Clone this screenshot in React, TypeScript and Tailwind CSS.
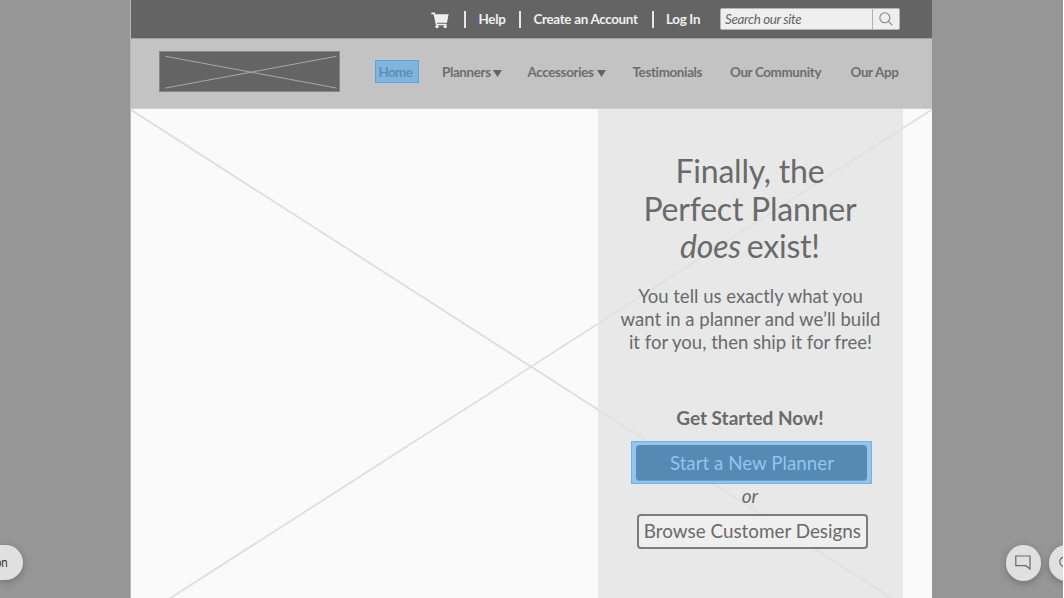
import React from "react";

const utilityLinks = [
  { label: "Help", box: "w-[55px]" },
  { label: "Create an Account", box: "w-[132.5px]" },
  { label: "Log In", box: "w-[68px]" },
];

const navItems = [
  { label: "Planners", box: "w-[85.5px]", arrow: "left-[50.5px]" },
  { label: "Accessories", box: "w-[105px]", arrow: "left-[69px]" },
  { label: "Testimonials", box: "w-[97.5px]" },
  { label: "Our Community", box: "w-[120.5px]" },
  { label: "Our App", box: "w-[60px]" },
];

function CartIcon() {
  return (
    <svg className="h-[18px] w-[18px] shrink-0" viewBox="0 0 18 18" fill="#efefef">
      <path d="M.3.5h3.6l.5 1.7h13.2L16 10.8H5.9l.3 1h9.4v1.4H4.9L2.6 2.2H.3z" />
      <circle cx="6" cy="14.6" r="1.7" />
      <circle cx="14.2" cy="14.6" r="1.7" />
    </svg>
  );
}

function UtilityBar() {
  return (
    <div className="flex h-[38px] shrink-0 items-center bg-[#646464] pl-[300px] text-[13.4px] font-bold tracking-[-0.31px] text-[#efefef]">
      <div className="flex w-[33px] pt-[3px]">
        <CartIcon />
      </div>
      {utilityLinks.map((l) => (
        <div key={l.label} className={`flex shrink-0 items-center whitespace-nowrap ${l.box}`}>
          <span className="mr-[12.5px] mt-px h-[17px] w-[2px] shrink-0 bg-[#e6e6e6]" />
          <a>{l.label}</a>
        </div>
      ))}
      <div className="flex h-[22px] w-[180px] shrink-0 items-center rounded-[2px] border border-[#b5b5b5] bg-[#efefef]">
        <span className="w-[151px] whitespace-nowrap pl-[4.5px] pt-px text-[13.4px] font-normal italic tracking-[-0.35px] text-[#646464]">
          Search our site
        </span>
        <span className="flex h-full flex-1 items-center justify-center border-l border-[#b0b0b0]">
          <svg className="h-[14px] w-[14px]" viewBox="0 0 14 14" fill="none" stroke="#858585" strokeWidth="1.1">
            <circle cx="5.8" cy="5.8" r="5" />
            <path d="M9.4 9.4l4 4" />
          </svg>
        </span>
      </div>
    </div>
  );
}

function MainNav() {
  return (
    <div className="flex h-[71px] shrink-0 border-b border-t border-b-[#d0d0d0] border-t-[#a3a3a3] bg-[#c3c3c3] text-[13.4px] font-bold tracking-[-0.34px] text-[#6d6d6d]">
      <div className="ml-[28px] mt-[12px] h-[40.5px] w-[180.5px] shrink-0 border border-[#868686] bg-[#646464]">
        <svg className="h-full w-full" viewBox="0 0 178.5 38.5" fill="none" stroke="#a9a9a9">
          <path d="M5.5 4.3L176.5 36M5.5 36L176.5 4.3" />
        </svg>
      </div>
      <div className="ml-[35.5px] mt-[21px] flex h-[23px] w-[44px] shrink-0 items-center border border-[#5ba5dc] bg-[#80b5df] pl-[2.5px] pt-px tracking-[-0.6px] text-[#5c8eb7]">
        Home
      </div>
      <div className="ml-[23px] mt-[21px] flex h-[23px] items-center pt-px">
        {navItems.map((n) => (
          <div key={n.label} className={`relative shrink-0 whitespace-nowrap ${n.box}`}>
            {n.label}
            {n.arrow && (
              <svg className={`absolute top-[8px] h-[7px] w-[9px] ${n.arrow}`} viewBox="0 0 9 7" fill="#646464">
                <path d="M0 0h9L4.5 7z" />
              </svg>
            )}
          </div>
        ))}
      </div>
    </div>
  );
}

function Hero() {
  return (
    <div className="relative flex h-[515px] shrink-0 bg-[#fafafa]">
      <svg className="absolute inset-0 h-full w-full" viewBox="0 0 801 515" preserveAspectRatio="none" stroke="#dedede" strokeWidth="1.8">
        <path d="M-.5 .5L801 515M801 .5L-1 515" />
      </svg>
      <div className="relative ml-[466.7px] flex w-[305.5px] flex-col items-center bg-[#e1e1e1]/75 pt-[43px] text-center text-[#6a6a6a]">
        <h1 className="-ml-[1px] whitespace-nowrap text-[32px] leading-[37.6px] tracking-[-0.22px]">
          Finally, the
          <br />
          Perfect Planner
          <br />
          <em>does</em>
          <span className="-ml-[2px]"> exist!</span>
        </h1>
        <p className="mt-[20.5px] whitespace-nowrap text-[18.55px] leading-[22.8px]">
          You tell us exactly what you
          <br />
          want in a planner and we’ll build
          <br />
          it for you, then ship it for free!
        </p>
        <p className="-ml-[1px] mt-[52.7px] text-[19px] font-bold leading-[23px]">Get Started Now!</p>
        <div className="ml-[2px] mt-[12px] h-[42.5px] w-[241px] border border-[#73b2e2] bg-[#92c5ee] px-[4px] py-[3px]">
          <button className="flex h-[35.5px] w-full items-center justify-center rounded-[4px] border-b border-[#6c9ec8] bg-[#558ab5] pl-[1px] text-[18.8px] text-[#92c5ee]">
            Start a New Planner
          </button>
        </div>
        <p className="-ml-[1px] text-[19px] italic leading-[24px]">or</p>
        <button className="ml-[4px] mt-[5.8px] flex h-[35px] w-[231px] items-center justify-center whitespace-nowrap rounded-[4px] border-2 border-[#7c7c7c] bg-[#efefef] text-[18.85px]">
          Browse Customer Designs
        </button>
      </div>
    </div>
  );
}

export default function App() {
  return (
    <div className="relative flex h-[598px] w-[1064px] overflow-hidden border-r border-white bg-[#969696] font-['Lato',sans-serif]">
      <div className="ml-[130px] flex h-[598px] w-[802px] shrink-0 flex-col overflow-hidden border-l border-[#b8b8b8]">
        <UtilityBar />
        <MainNav />
        <Hero />
      </div>
      <div className="absolute left-0 top-[545px] flex h-[35px] w-[23px] items-center justify-end rounded-r-full bg-[#e0e0e0] pr-[15.5px] pt-px font-['Inter',sans-serif] text-[11px] tracking-[-0.3px] text-[#333] shadow-[0_2px_7px_rgba(0,0,0,0.25)]">
        on
      </div>
      <div className="absolute left-[1005.5px] top-[545px] flex h-[35.5px] w-[35.5px] items-center justify-center rounded-full bg-[#e0e0e0] shadow-[0_2px_7px_rgba(0,0,0,0.25)]">
        <svg className="h-[15px] w-[16px]" viewBox="0 0 16 15" fill="none" stroke="#686868" strokeWidth="1.2">
          <path d="M.8 1H15V14L10.8 10.7H.8z" />
        </svg>
      </div>
      <div className="absolute left-[1048.5px] top-[545px] flex h-[35.5px] w-[35.5px] items-center justify-center rounded-full bg-[#e0e0e0] shadow-[0_2px_7px_rgba(0,0,0,0.25)]">
        <svg className="h-[14px] w-[14px]" viewBox="0 0 14 14" fill="none" stroke="#686868" strokeWidth="1.2">
          <circle cx="5.8" cy="5.8" r="5" />
          <path d="M9.4 9.4l4 4" />
        </svg>
      </div>
    </div>
  );
}
